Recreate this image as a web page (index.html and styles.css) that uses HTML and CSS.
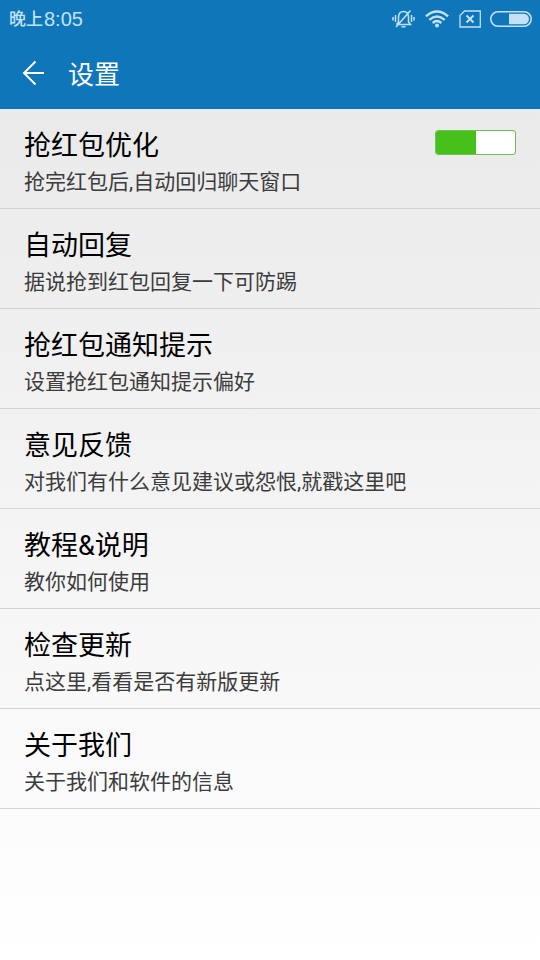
FILE: index.html
```html
<!DOCTYPE html>
<html lang="zh-CN">
<head>
<meta charset="utf-8">
<meta name="viewport" content="width=device-width, initial-scale=1">
<title>设置</title>
<link rel="stylesheet" href="styles.css">
</head>
<body>
<header class="top">
  <div class="status">
    <div class="clock"><span class="period">晚上</span><span class="time">8:05</span></div>
    <div class="indicators">
      <svg width="24" height="20" viewBox="0 0 24 20" fill="none" stroke="currentColor" stroke-width="1.5" aria-hidden="true">
        <path d="M4.500 15.500h14l-2-2.500V8q-.3-5.500-5-5.500T6.500 8v5l-2 2.500M9.500 17.800h4M4 18L18.500 1.500M3.500 6v7M1 8v3.500M19.500 6v7M22 8v3.500"/>
      </svg>
      <svg width="25" height="18" viewBox="0 0 25 18" fill="none" stroke="currentColor" stroke-width="2.400" aria-hidden="true">
        <path d="M.9 6.300Q12-3.300 23.100 6.300M4.300 9.800Q12 3.200 19.700 9.800M7.700 13Q12 9.200 16.300 13"/>
        <circle cx="12" cy="15.600" r="2" fill="currentColor" stroke="none"/>
      </svg>
      <svg width="22" height="18" viewBox="0 0 22 18" fill="none" stroke="currentColor" stroke-width="1.300" aria-hidden="true">
        <path d="M5.500 1H21.300v16H1V5.500z"/>
        <path d="M7.500 5.500l7 7M14.500 5.500l-7 7" stroke-width="2"/>
      </svg>
      <svg width="42" height="16" viewBox="0 0 42 16" aria-hidden="true">
        <rect x=".8" y=".8" width="40.400" height="14.400" rx="7.200" fill="none" stroke="currentColor" stroke-width="1.600"/>
        <path d="M19 2.800h14.800a5.200 5.200 0 0 1 0 10.400H19z" fill="currentColor"/>
      </svg>
    </div>
  </div>
  <div class="bar">
    <button class="back" type="button" aria-label="返回">
      <svg width="24" height="26" viewBox="0 0 24 26" fill="none" stroke="currentColor" stroke-width="2" aria-hidden="true">
        <path d="M22 13H2M13.500 1.500L2 13l11.500 11.500"/>
      </svg>
    </button>
    <h1 class="heading">设置</h1>
  </div>
</header>
<main class="list">
  <label class="row">
    <span class="text"><span class="title">抢红包优化</span><span class="note">抢完红包后,自动回归聊天窗口</span></span>
    <input class="switch" type="checkbox" role="switch" checked>
  </label>
  <a class="row" href="#reply"><span class="text"><span class="title">自动回复</span><span class="note">据说抢到红包回复一下可防踢</span></span></a>
  <a class="row" href="#notify"><span class="text"><span class="title">抢红包通知提示</span><span class="note">设置抢红包通知提示偏好</span></span></a>
  <a class="row" href="#feedback"><span class="text"><span class="title">意见反馈</span><span class="note">对我们有什么意见建议或怨恨,就戳这里吧</span></span></a>
  <a class="row" href="#help"><span class="text"><span class="title">教程&amp;说明</span><span class="note">教你如何使用</span></span></a>
  <a class="row" href="#update"><span class="text"><span class="title">检查更新</span><span class="note">点这里,看看是否有新版更新</span></span></a>
  <a class="row" href="#about"><span class="text"><span class="title">关于我们</span><span class="note">关于我们和软件的信息</span></span></a>
</main>
</body>
</html>
```
FILE: styles.css
```css
* {
  box-sizing: border-box;
}

body {
  margin: 0;
  min-height: 100vh;
  display: flex;
  flex-direction: column;
  background: #fff;
  font-family: Roboto, "Noto Sans CJK SC", sans-serif;
}

.top {
  background: #0f76b9;
  color: #fff;
}

.status {
  display: flex;
  align-items: center;
  justify-content: space-between;
  height: 37px;
  padding: 0 8px 0 9px;
  color: #c3e2f5;
}

.clock {
  display: flex;
  align-items: center;
  gap: 1px;
  line-height: 24px;
}

.period {
  font-size: 17px;
  font-weight: 500;
}

.time {
  font-family: "Liberation Sans", sans-serif;
  font-size: 20px;
}

.indicators {
  display: flex;
  align-items: center;
  gap: 9px;
}

.indicators svg {
  display: block;
}

.bar {
  display: flex;
  align-items: center;
  height: 72px;
  padding: 0 22px;
  gap: 22px;
}

.back {
  display: flex;
  padding: 0;
  border: 0;
  background: none;
  color: inherit;
}

.heading {
  margin: 0;
  padding-top: 3px;
  font-size: 26px;
  font-weight: 400;
  line-height: 36px;
}

.list {
  flex: 1;
  background: linear-gradient(#eaeaea, #fff);
}

.row {
  display: flex;
  align-items: flex-start;
  justify-content: space-between;
  padding: 17px 24px 9px;
  border-bottom: 1px solid #d3d3d3;
  color: #000;
  text-decoration: none;
}

.title,
.note {
  display: block;
}

.title {
  font-size: 27px;
  line-height: 40px;
}

.note {
  color: #3c3c3c;
  font-size: 21px;
  line-height: 33px;
}

.switch {
  appearance: none;
  flex: none;
  width: 81px;
  height: 25px;
  margin: 4px 0 0;
  border: 1px solid #6cc34f;
  border-radius: 3px;
  background: linear-gradient(#fff, #fff) left / 50% 100% no-repeat padding-box #ccc;
}

.switch:checked {
  background-color: #46c11b;
  background-position: right;
}
```
